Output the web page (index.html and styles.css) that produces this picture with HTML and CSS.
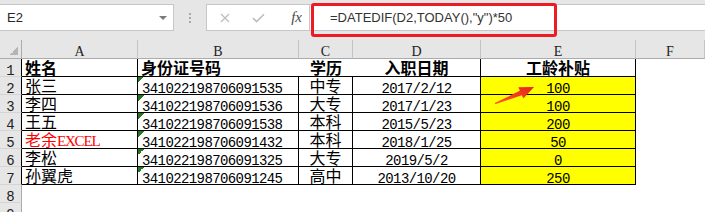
FILE: index.html
```html
<!DOCTYPE html>
<html>
<head>
<meta charset="utf-8">
<link rel="stylesheet" href="styles.css">
</head>
<body>
<div class="app">
  <div class="fbar">
    <div class="namebox"><span>E2</span><span class="dd"></span></div>
    <div class="grip"><i></i><i></i><i></i></div>
    <div class="btns">
      <svg width="10" height="10" viewBox="0 0 10 10"><path d="M1 1L9 9M9 1L1 9" stroke="#bdbdbd" stroke-width="1.3" fill="none"/></svg>
      <svg width="13" height="10" viewBox="0 0 13 10"><path d="M1 5.2L4.6 8.6L12 1.2" stroke="#bdbdbd" stroke-width="1.6" fill="none"/></svg>
      <span class="fx">fx</span>
    </div>
    <div class="formula">=DATEDIF(D2,TODAY(),"y")*50</div>
  </div>

  <div class="sheet">
    <div class="corner"><span></span></div>
    <div class="ch">A</div><div class="ch">B</div><div class="ch">C</div><div class="ch">D</div><div class="ch">E</div><div class="ch">F</div>

    <div class="rh bk">1</div>
    <div class="c t b br bb">姓名</div>
    <div class="c t b bb">身份证号码</div>
    <div class="c t b ctr bb">学历</div>
    <div class="c t b ctr bb br">入职日期</div>
    <div class="c t b ctr bb br">工龄补贴</div>
    <div class="c"></div>

    <div class="rh bk">2</div>
    <div class="c t br bb">张三</div>
    <div class="c n g br bb">341022198706091535</div>
    <div class="c t ctr br bb">中专</div>
    <div class="c n ctr br bb">2017/2/12</div>
    <div class="c n ctr y br bb">100</div>
    <div class="c"></div>

    <div class="rh bk">3</div>
    <div class="c t br bb">李四</div>
    <div class="c n g br bb">341022198706091536</div>
    <div class="c t ctr br bb">大专</div>
    <div class="c n ctr br bb">2017/1/23</div>
    <div class="c n ctr y br bb">100</div>
    <div class="c"></div>

    <div class="rh bk">4</div>
    <div class="c t br bb">王五</div>
    <div class="c n g br bb">341022198706091538</div>
    <div class="c t ctr br bb">本科</div>
    <div class="c n ctr br bb">2015/5/23</div>
    <div class="c n ctr y br bb">200</div>
    <div class="c"></div>

    <div class="rh bk">5</div>
    <div class="c t red br bb">老余<span class="lat">EXCEL</span></div>
    <div class="c n g br bb">341022198706091432</div>
    <div class="c t ctr br bb">本科</div>
    <div class="c n ctr br bb">2018/1/25</div>
    <div class="c n ctr y br bb">50</div>
    <div class="c"></div>

    <div class="rh bk">6</div>
    <div class="c t br bb">李松</div>
    <div class="c n g br bb">341022198706091325</div>
    <div class="c t ctr br bb">大专</div>
    <div class="c n ctr br bb">2019/5/2</div>
    <div class="c n ctr y br bb">0</div>
    <div class="c"></div>

    <div class="rh bk">7</div>
    <div class="c t br bb">孙翼虎</div>
    <div class="c n g br bb">341022198706091245</div>
    <div class="c t ctr br bb">高中</div>
    <div class="c n ctr br bb">2013/10/20</div>
    <div class="c n ctr y br bb">250</div>
    <div class="c"></div>

    <div class="rh">8</div>
    <div class="c"></div><div class="c"></div><div class="c"></div><div class="c"></div><div class="c"></div><div class="c"></div>

    <div class="rh">9</div>
    <div class="c"></div><div class="c"></div><div class="c"></div><div class="c"></div><div class="c"></div><div class="c"></div>
  </div>

  <div class="hl"></div>
  <svg class="arrow" width="50" height="26" viewBox="0 0 50 26">
    <defs>
      <linearGradient id="ag" x1="0" y1="1" x2="1" y2="0">
        <stop offset="0" stop-color="#ff5a2a"/>
        <stop offset="1" stop-color="#e8231c"/>
      </linearGradient>
    </defs>
    <polygon points="4.8,21 29.9,8.8 28.4,5.2 44,5 33.4,16.6 31.8,13.2 5.2,22.2" fill="url(#ag)"/>
  </svg>
</div>
</body>
</html>
```

FILE: styles.css
```css
* { box-sizing: border-box; }
html, body { margin: 0; padding: 0; }
body {
  width: 705px;
  height: 212px;
  overflow: hidden;
  background: #fff;
  font-family: "Liberation Sans", sans-serif;
}
.app { position: relative; width: 705px; height: 212px; overflow: hidden; }

/* formula bar */
.fbar {
  display: flex;
  align-items: flex-start;
  height: 40px;
  padding-top: 4px;
  background: #e6e6e6;
}
.namebox {
  display: flex;
  align-items: center;
  width: 174px;
  height: 27px;
  background: #fff;
  border: 1px solid #c6c6c6;
  border-left: 0;
  padding: 0 6px 0 7px;
  font-size: 13px;
  color: #262626;
}
.dd {
  margin-left: auto;
  width: 0;
  height: 0;
  border-left: 4px solid transparent;
  border-right: 4px solid transparent;
  border-top: 4px solid #7b7b7b;
}
.grip {
  width: 32px;
  height: 27px;
  display: flex;
  flex-direction: column;
  align-items: center;
  justify-content: center;
  gap: 2px;
}
.grip i { display: block; width: 2px; height: 2px; background: #a8a8a8; }
.btns {
  display: grid;
  grid-template-columns: 36px 30px 1fr;
  align-items: center;
  width: 103px;
  height: 27px;
  background: #fff;
  border: 1px solid #c6c6c6;
  border-right: 0;
}
.btns svg { justify-self: center; display: block; }
.fx {
  justify-self: end;
  margin-right: 7px;
  font-family: "Liberation Serif", serif;
  font-style: italic;
  font-size: 15px;
  color: #4a4a4a;
}
.formula {
  flex: 1;
  height: 27px;
  background: #fff;
  border: 1px solid #c6c6c6;
  border-right: 0;
  padding-left: 20px;
  font-size: 13px;
  line-height: 25px;
  color: #333;
  white-space: nowrap;
}

/* sheet */
.sheet {
  display: grid;
  grid-template-columns: 22px 116px 161px 54px 128px 155px 1fr;
  grid-template-rows: 19px;
  grid-auto-rows: 18px;
}
.corner {
  background: #e6e6e6;
  border-right: 1px solid #ababab;
  border-bottom: 1px solid #ababab;
  display: flex;
  justify-content: flex-end;
  align-items: flex-end;
  padding: 0 3px 3px 0;
}
.corner span {
  display: block;
  width: 8px;
  height: 8px;
  background: linear-gradient(135deg, transparent 50%, #b4b4b4 50%);
}
.ch {
  background: #e6e6e6;
  border-right: 1px solid #c4c4c4;
  border-bottom: 1px solid #ababab;
  text-align: center;
  font-family: "Liberation Serif", serif;
  font-size: 14px;
  line-height: 15px;
  padding-top: 4px;
  color: #222;
}
.rh {
  background: #e6e6e6;
  border-right: 1px solid #ababab;
  border-bottom: 1px solid #d4d4d4;
  text-align: center;
  font-family: "Liberation Mono", monospace;
  font-size: 14px;
  line-height: 18px;
  padding-top: 3px;
  color: #222;
}
.rh.bk { border-right-color: #000; }

.c { white-space: nowrap; color: #000; }
.t {
  font-family: "Noto Sans CJK SC", sans-serif;
  font-size: 16px;
  line-height: 17px;
  padding-left: 3px;
}
.n {
  font-family: "Liberation Mono", monospace;
  font-size: 14px;
  letter-spacing: -0.6px;
  line-height: 18px;
  padding-top: 3px;
  padding-left: 4px;
}
.ctr { text-align: center; padding-left: 0; }
.b { font-weight: 700; }
.br { border-right: 1px solid #000; }
.bb { border-bottom: 1px solid #000; }
.y { background-color: #ffff00; }
.g { background: linear-gradient(135deg, #1f7a1f 50%, transparent 50%) no-repeat 0 0 / 6px 6px; }
.red { color: #ff0000; }
.lat {
  font-family: "Liberation Serif", serif;
  font-size: 15px;
  letter-spacing: -1.2px;
}

/* overlays */
.hl {
  position: absolute;
  left: 311px;
  top: 3px;
  width: 246px;
  height: 34px;
  border: 3px solid #ed1c24;
  border-radius: 3px;
}
.arrow { position: absolute; left: 490px; top: 82px; }
```
